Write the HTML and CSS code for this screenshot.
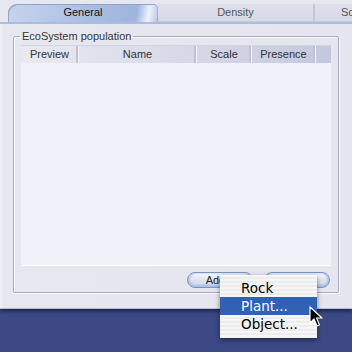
FILE: index.html
```html
<!DOCTYPE html>
<html lang="en">
<head>
  <meta charset="UTF-8" />
  <title>EcoSystem</title>
  <link rel="stylesheet" href="styles.css">
</head>
<body>

<div class="window">
  <div class="tabs">
    <div class="tab active">General</div>
    <div class="tab">Density</div>
    <div class="tab last">Sc</div>
  </div>

  <div class="panel">
    <fieldset class="group">
      <legend>EcoSystem population</legend>
      <div class="list">
        <div class="list-head">
          <div class="col c-preview">Preview</div>
          <div class="col c-name">Name</div>
          <div class="col c-scale">Scale</div>
          <div class="col c-presence">Presence</div>
          <div class="col c-rest"></div>
        </div>
        <div class="list-body"></div>
      </div>
      <div class="buttons">
        <button class="pill">Add...</button>
        <button class="pill disabled">Remove</button>
      </div>
    </fieldset>
  </div>
</div>

<div class="menu">
  <div class="item">Rock</div>
  <div class="item selected">Plant...</div>
  <div class="item">Object...</div>
</div>

<svg class="cursor" width="14" height="22" viewBox="0 0 14 22">
  <path d="M1 1 L1 17 L5 13 L8 20 L10.5 19 L7.5 12 L13 12 Z" fill="#000" stroke="#fff" stroke-width="1.2" stroke-linejoin="round"/>
</svg>

</body>
</html>
```

FILE: styles.css
```css
body {
  margin: 0;
  width: 352px;
  height: 352px;
  overflow: hidden;
  background: #3c4985;
  font-family: 'Liberation Sans', Arial, sans-serif;
  font-size: 11px;
  color: #222;
  position: relative;
}
.window {
  height: 308px;
  background: linear-gradient(to right, #f0f0f6 0, #e6e7ef 4px, #e4e5ee 100%);
  box-shadow: 0 1px 0 #b9bbd0, 0 3px 4px rgba(10,15,50,0.7);
  display: flex;
  flex-direction: column;
}
.tabs {
  height: 18px;
  padding: 4px 0 0 8px;
  display: flex;
  overflow: hidden;
  background: #e6e7ef;
  border-bottom: 2px solid #a9bde0;
}
.tab {
  width: 155px;
  flex-shrink: 0;
  text-align: center;
  line-height: 17px;
  color: #555;
  background: linear-gradient(#dfe0ea, #d6d8e4);
  border-right: 2px solid #c4c6d6;
  border-bottom: 1px solid #c8cada;
}
.tab.active {
  width: 150px;
  color: #111;
  border: none;
  border-radius: 9px 5px 0 0;
  background: linear-gradient(100deg, #c8d4ee 0%, #aabde2 55%, #9fb4de 85%, #eef2fa 93%, #b4c4e6 100%);
  box-shadow: inset 1px 1px 0 #8fa4cc, inset -1px 0 0 #9fb2d8;
}
.tab.last {
  padding-left: 26px;
  text-align: left;
  border-right: none;
}
.panel {
  padding: 6px 13px 0 13px;
}
.group {
  margin: 0;
  padding: 3px 7px 0 7px;
  height: 258px;
  width: 310px;
  border: 1px solid #a9abc3;
  border-radius: 2px;
  box-shadow: inset 1px 1px 0 #fafaff, 1px 1px 0 #fafaff;
}
.group legend {
  padding: 0 2px;
  margin-left: -1px;
  font-size: 11px;
  color: #333;
}
.list {
  width: 310px;
  height: 220px;
  background: #f0f1f9;
  display: flex;
  flex-direction: column;
  box-shadow: 0 1px 0 #ffffff;
}
.list-head {
  height: 17px;
  display: flex;
  background: linear-gradient(to right, #e8e9f1 0%, #d8dae8 50%, #c5c8dd 100%);
  border-top: 1px solid #d2d4e2;
}
.col {
  line-height: 17px;
  text-align: center;
  color: #333;
  border-right: 1px solid #f4f4fa;
  box-shadow: inset -2px 0 0 #c0c2d4;
}
.c-preview { width: 57px; }
.c-name { width: 117px; }
.c-scale { width: 54px; }
.c-presence { width: 63px; }
.c-rest { flex: 1; border: none; box-shadow: none; }
.list-body {
  flex: 1;
}
.buttons {
  display: flex;
  justify-content: flex-end;
  gap: 11px;
  margin-top: 7px;
  padding-right: 1px;
}
.pill {
  width: 66px;
  height: 16px;
  padding: 0;
  border-radius: 8px;
  border: 1px solid #7c94c0;
  background: linear-gradient(#f8fafe 0%, #dde3f0 50%, #cdd6ea 100%);
  box-shadow: inset 0 -2px 2px #a9c0e4, inset 2px 0 2px #b8cbec, inset -2px 0 2px #b8cbec;
  font-family: 'Liberation Sans', Arial, sans-serif;
  font-size: 11px;
  color: #222;
}
.pill.disabled {
  color: #bcbcc8;
}
.menu {
  position: absolute;
  left: 220px;
  top: 275px;
  width: 97px;
  padding: 4px 0 5px;
  background: repeating-linear-gradient(#f6f6f6 0, #f6f6f6 2px, #ececec 2px, #ececec 4px);
  box-shadow: 0 2px 5px rgba(0,0,0,0.45);
  font-family: 'DejaVu Sans', Verdana, sans-serif;
  font-size: 13.5px;
}
.item {
  height: 18px;
  line-height: 18px;
  padding-left: 21px;
  color: #000;
}
.item.selected {
  background: #2f61b5;
  color: #fff;
}
.cursor {
  position: absolute;
  left: 309px;
  top: 306px;
}
```
